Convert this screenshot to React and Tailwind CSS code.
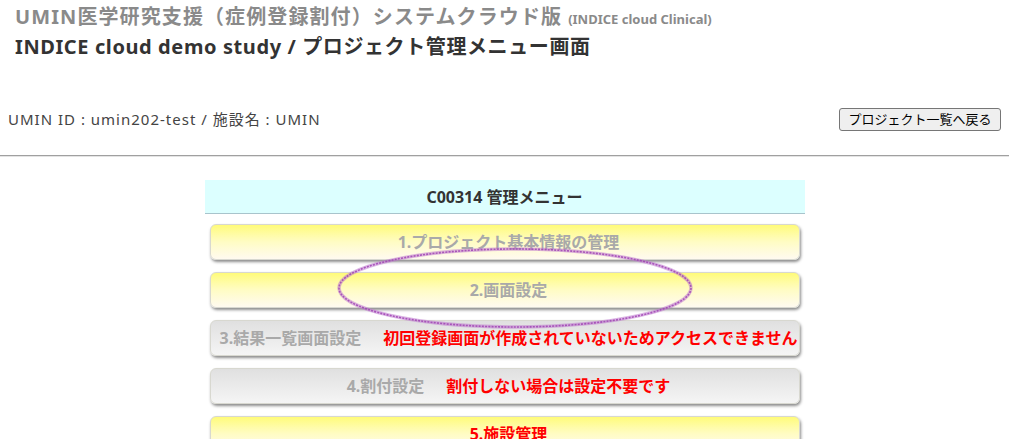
import React from "react";

const font = { fontFamily: '"Noto Sans", "Noto Sans CJK JP", sans-serif' };

function MenuButton({ label, note, active, labelRed }) {
  const bg = active
    ? "bg-gradient-to-b from-[#fffb78] via-[#fffcc4] to-[#fffaf0]"
    : "bg-gradient-to-b from-[#e0e0e0] to-[#f5f5f5]";
  return (
    <div
      className={`mx-[5px] h-[36px] rounded-[6px] border border-[#d8d8d0] ${bg} shadow-[1px_2px_3px_rgba(0,0,0,0.45)] flex items-center justify-center gap-[22px] pl-[8px] whitespace-nowrap text-[16px] font-bold leading-none`}
    >
      <span className={labelRed ? "text-[#ff0000]" : "text-[#a9a9a9]"}>{label}</span>
      {note && <span className="text-[#ff0000]">{note}</span>}
    </div>
  );
}

export default function App() {
  return (
    <div className="w-[1009px] h-[439px] overflow-hidden bg-white" style={font}>
      <div className="pl-[15px] pt-[3px]">
        <div className="text-[20px] leading-[27px] font-bold text-[#8a8a8a] whitespace-nowrap tracking-[1.1px]">
          UMIN医学研究支援（症例登録割付）システムクラウド版
          <span className="text-[13px] ml-[6px] tracking-normal">(INDICE cloud Clinical)</span>
        </div>
        <div className="text-[20px] leading-[28px] font-bold text-[#333333] whitespace-nowrap tracking-[0.6px]">
          INDICE cloud demo study / プロジェクト管理メニュー画面
        </div>
      </div>
      <div className="mt-[47px] flex items-center justify-between pl-[8px] pr-[8px]">
        <div className="text-[15px] text-[#444444] leading-[23px] tracking-[1px]">
          UMIN ID : umin202-test / 施設名 : UMIN
        </div>
        <button className="h-[23px] w-[162px] rounded-[3px] border border-[#767676] bg-[#efefef] text-[13px] text-black leading-none">
          プロジェクト一覧へ戻る
        </button>
      </div>
      <div className="mt-[24px] border-t border-[#a0a0a0] border-b border-b-[#e4e4e4] h-[2px]" />
      <div className="relative mx-auto mt-[23px] w-[600px]">
        <div className="h-[34px] bg-[#dcffff] border-b border-[#a8c4cc] flex items-center justify-center text-[16px] font-bold text-[#333333]">
          C00314 管理メニュー
        </div>
        <div className="mt-[10px] flex flex-col gap-[12px]">
          <MenuButton label="1.プロジェクト基本情報の管理" active />
          <MenuButton label="2.画面設定" active />
          <MenuButton label="3.結果一覧画面設定" note="初回登録画面が作成されていないためアクセスできません" />
          <MenuButton label="4.割付設定" note="割付しない場合は設定不要です" />
          <MenuButton label="5.施設管理" active labelRed />
        </div>
        <svg
          className="absolute left-[132px] top-[66px] pointer-events-none"
          width="360"
          height="86"
          viewBox="0 0 360 86"
        >
          <ellipse cx="178" cy="42" rx="176" ry="39" fill="none" stroke="#c07ad0" strokeWidth="3.5" strokeOpacity="0.55" />
          <ellipse cx="178" cy="42" rx="176" ry="39" fill="none" stroke="#a044b4" strokeWidth="1.6" strokeDasharray="2 1.2" strokeOpacity="0.85" />
        </svg>
      </div>
    </div>
  );
}
